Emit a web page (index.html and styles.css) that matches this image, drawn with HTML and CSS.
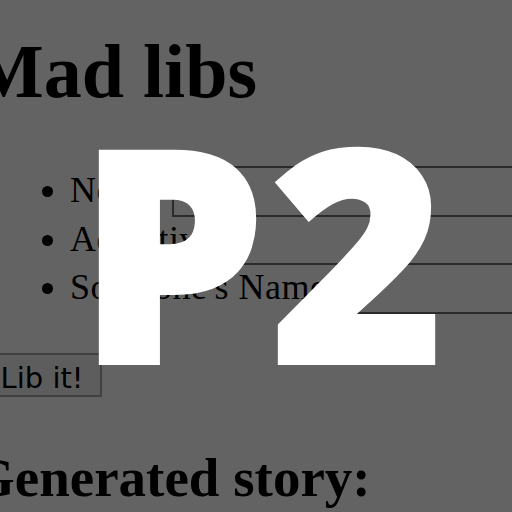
FILE: index.html
```html
<!DOCTYPE html>
<html lang="en">
<head>
    <meta charset="UTF-8">
    <title>Mad libs</title>
    <link rel="stylesheet" href="styles.css">
</head>
<body>
    <main class="page">
        <h1>Mad libs</h1>
        <ul class="fields">
            <li>Noun: <input type="text"></li>
            <li>Adjective: <input type="text"></li>
            <li>Someone's Name: <input type="text"></li>
        </ul>
        <button class="lib">Lib it!</button>
        <h2>Generated story:</h2>
    </main>
    <div class="cover">P2</div>
</body>
</html>
```

FILE: styles.css
```css
* {
    box-sizing: border-box;
}

body {
    margin: 0;
    width: 512px;
    height: 512px;
    overflow: hidden;
    background: #fff;
    font-family: "Liberation Serif", "Times New Roman", serif;
    color: #000;
}

h1 {
    margin: 27px 0 0 -28px;
    font-size: 76px;
    line-height: 88px;
    white-space: nowrap;
}

.fields {
    margin: 51px 0 0;
    padding-left: 70px;
    list-style: disc;
    font-size: 36px;
    letter-spacing: 0.5px;
}

.fields li {
    height: 48.6px;
    line-height: 48.6px;
    white-space: nowrap;
}

.fields input {
    vertical-align: top;
    width: 420px;
    height: 50.6px;
    margin: 0;
    padding: 0;
    border: 2px solid #707070;
    background: #fff;
}

.lib {
    display: block;
    margin: 41.7px 0 0 -18px;
    height: 44px;
    padding: 5px 16.6px 0;
    border: 2px solid #a8a8a8;
    background: #efefef;
    font-family: "DejaVu Sans", sans-serif;
    font-size: 29px;
    color: #000;
}

h2 {
    margin: 48.5px 0 0 -28px;
    font-size: 55px;
    line-height: 64px;
    white-space: nowrap;
}

/* grey veil with the big label on top of the page */
.cover {
    position: fixed;
    inset: 0;
    padding: 101px 0 0 78px;
    background: rgba(0, 0, 0, 0.61);
    color: #fff;
    font-family: "Open Sans", sans-serif;
    font-weight: 800;
    font-size: 296px;
    line-height: 296px;
    letter-spacing: 6px;
    -webkit-text-stroke: 4px #fff;
    white-space: nowrap;
}
```
